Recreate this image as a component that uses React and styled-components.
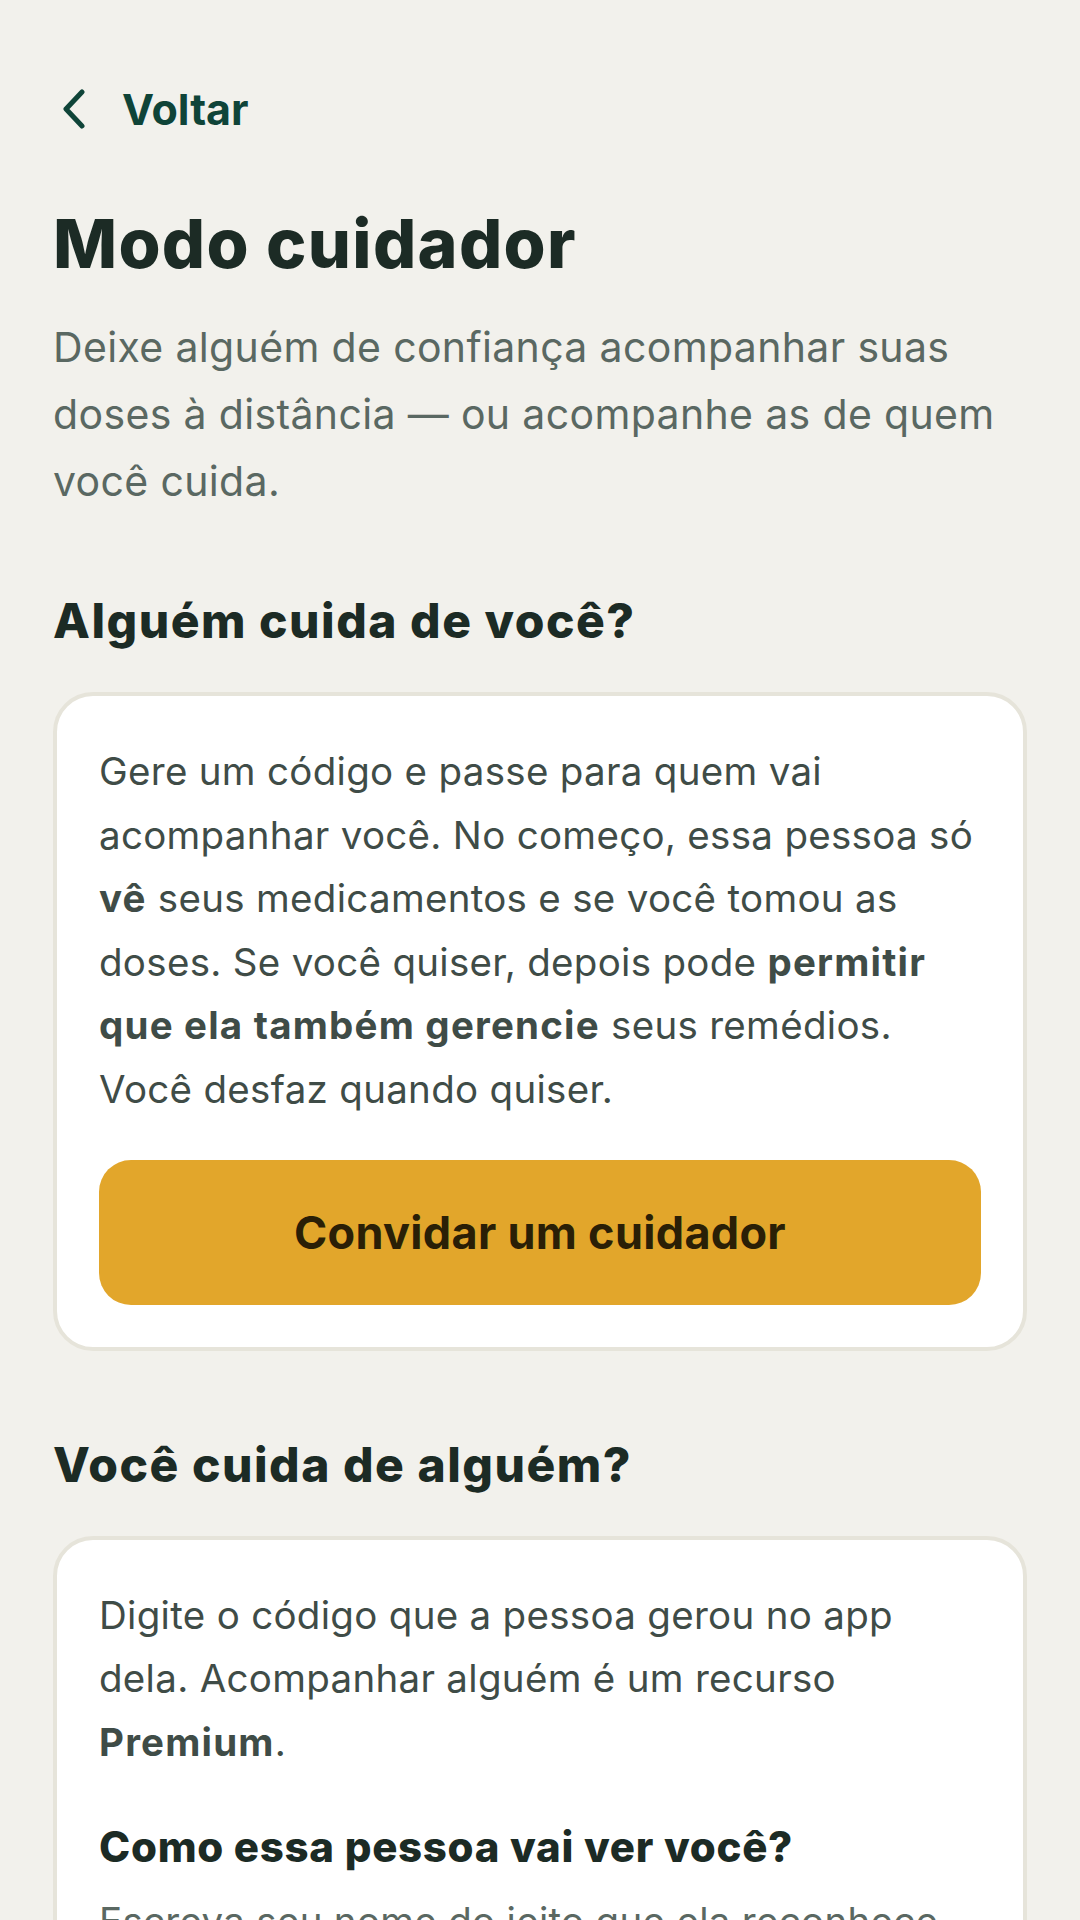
import React from "react";
import styled, {createGlobalStyle} from "styled-components";

const GlobalStyle = createGlobalStyle`
	html, body {
		margin: 0;
		padding: 0;
		background: #f2f1ec;
	}
	body {
		font-family: Inter, "Noto Sans", "Liberation Sans", sans-serif;
		-webkit-font-smoothing: antialiased;
	}
`;

const Page = styled.div`
	width: 1080px;
	min-height: 1920px;
	box-sizing: border-box;
	padding: 84px 53px 0;
	background: #f2f1ec;
	overflow: hidden;
`;

const BackLink = styled.a`
	display: flex;
	align-items: center;
	gap: 36px;
	height: 50px;
	padding-left: 9px;
	color: #0f4438;
	font-size: 43px;
	font-weight: 700;
	line-height: 50px;
	text-decoration: none;
	cursor: pointer;
`;

const Title = styled.h1`
	margin: 68px 0 0;
	color: #1c2b25;
	font-size: 68px;
	font-weight: 800;
	line-height: 82px;
	letter-spacing: 1.3px;
`;

const Intro = styled.p`
	margin: 30px 0 0;
	color: #5a6862;
	font-size: 41px;
	line-height: 67px;
	letter-spacing: 0.35px;
`;

const Section = styled.section`
	margin-top: ${(props) => props.top}px;
`;

const SectionTitle = styled.h2`
	margin: 0;
	color: #1c2b25;
	font-size: 48px;
	font-weight: 800;
	line-height: 55px;
	letter-spacing: 1.5px;
`;

const Card = styled.div`
	margin-top: 44px;
	padding: 44px 42px 42px;
	background: #ffffff;
	border: 4px solid #e6e4da;
	border-radius: 40px;
`;

const CardText = styled.p`
	margin: 0;
	color: #3f4c47;
	font-size: 38.5px;
	line-height: 63.6px;
	letter-spacing: 0.3px;

	strong {
		font-weight: 700;
		letter-spacing: 1.2px;
	}
`;

const PrimaryButton = styled.button`
	display: flex;
	align-items: center;
	justify-content: center;
	width: 100%;
	height: 145px;
	margin-top: 38px;
	border: none;
	border-radius: 32px;
	background: #e2a62b;
	color: #2a1f06;
	font-family: inherit;
	font-size: 45px;
	font-weight: 700;
	letter-spacing: 0.3px;
	cursor: pointer;
`;

const SubTitle = styled.h3`
	margin: 48px 0 0;
	color: #1c2b25;
	font-size: 42px;
	font-weight: 800;
	line-height: 50px;
	letter-spacing: 0.7px;
`;

const Hint = styled.p`
	margin: 18px 0 0;
	color: #5a6862;
	font-size: 38.5px;
	line-height: 63.6px;
	letter-spacing: 0.3px;
`;

function ChevronLeft() {
	return (
		<svg width="24" height="40" viewBox="0 0 24 40" fill="none">
			<path d="M20 3 L4 20 L20 37" stroke="currentColor" strokeWidth="5" strokeLinecap="round" strokeLinejoin="round" />
		</svg>
	);
}

export default function App() {
	return (
		<Page>
			<GlobalStyle />
			<BackLink>
				<ChevronLeft />
				Voltar
			</BackLink>

			<Title>Modo cuidador</Title>
			<Intro>Deixe alguém de confiança acompanhar suas doses à distância — ou acompanhe as de quem você cuida.</Intro>

			<Section top={78}>
				<SectionTitle>Alguém cuida de você?</SectionTitle>
				<Card>
					<CardText>
						Gere um código e passe para quem vai acompanhar você. No começo, essa pessoa só <strong>vê</strong> seus
						medicamentos e se você tomou as doses. Se você quiser, depois pode <strong>permitir que ela também gerencie</strong>{" "}
						seus remédios. Você desfaz quando quiser.
					</CardText>
					<PrimaryButton>Convidar um cuidador</PrimaryButton>
				</Card>
			</Section>

			<Section top={86}>
				<SectionTitle>Você cuida de alguém?</SectionTitle>
				<Card>
					<CardText>
						Digite o código que a pessoa gerou no app dela. Acompanhar alguém é um recurso <strong>Premium</strong>.
					</CardText>
					<SubTitle>Como essa pessoa vai ver você?</SubTitle>
					<Hint>Escreva seu nome do jeito que ela reconhece.</Hint>
				</Card>
			</Section>
		</Page>
	);
}
